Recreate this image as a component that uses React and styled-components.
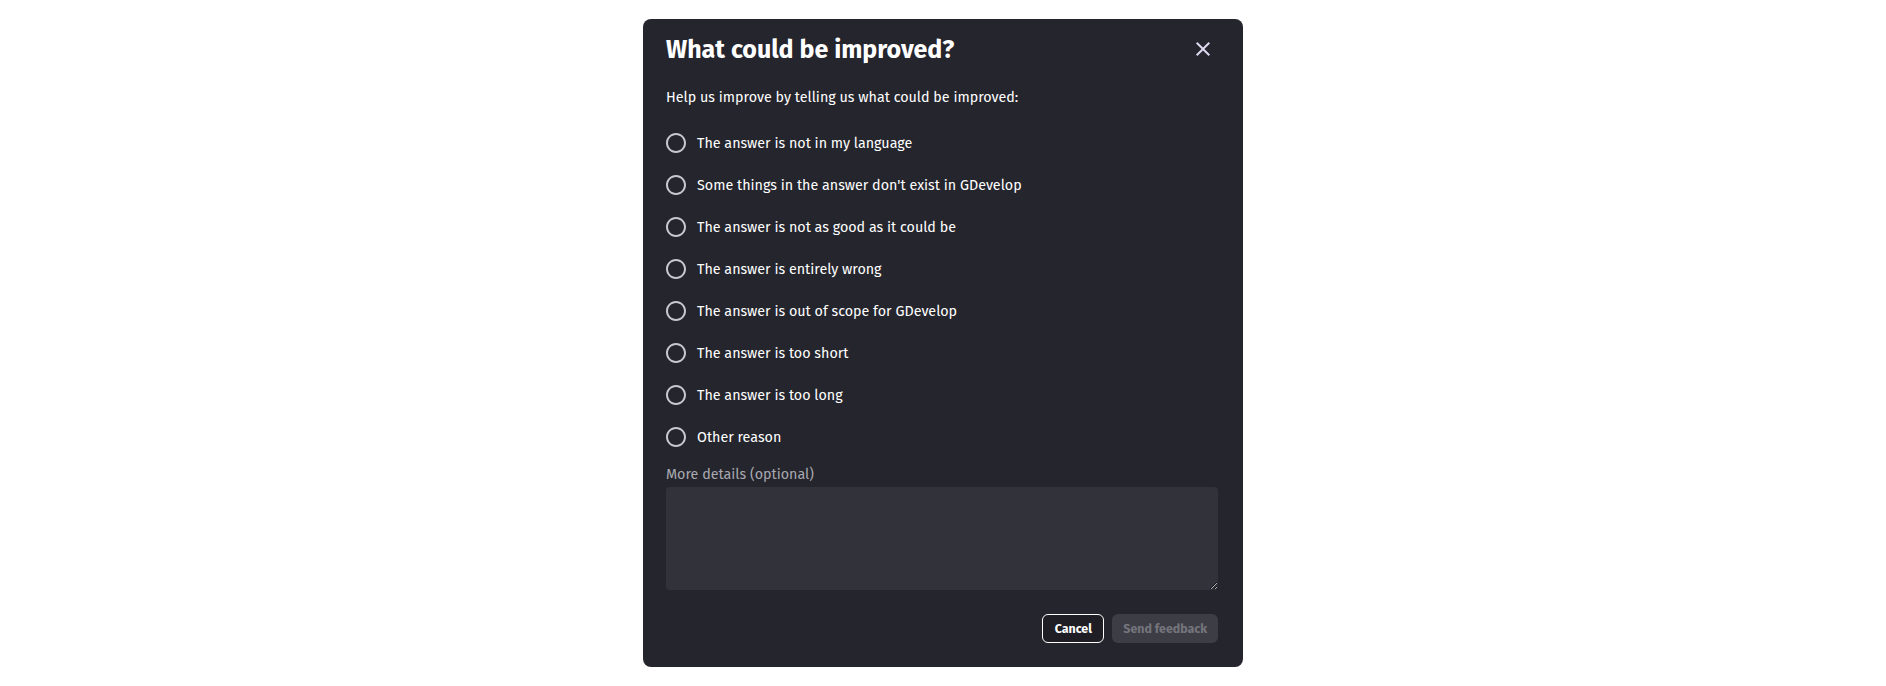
import React from "react";
import styled, { createGlobalStyle } from "styled-components";

const Global = createGlobalStyle`
  html, body { margin: 0; padding: 0; background: #ffffff; }
  body { font-family: "Fira Sans", Lato, "Noto Sans", sans-serif; }
  * { box-sizing: border-box; }
`;

const Page = styled.div`
  height: 686px;
  display: flex;
  align-items: center;
  justify-content: center;
`;

const Dialog = styled.div`
  width: 600px;
  background: #25252d;
  border-radius: 8px;
  padding: 12px 25px 24px 23px;
  display: flex;
  flex-direction: column;
  color: #fafafa;
`;

const Header = styled.div`
  display: flex;
  align-items: center;
  justify-content: space-between;
  height: 38px;
`;

const Title = styled.h1`
  margin: 0;
  font-size: 25px;
  font-weight: 700;
  color: #ffffff;
`;

const CloseButton = styled.button`
  background: none;
  border: 0;
  padding: 0;
  margin-right: 3px;
  margin-top: -2px;
  width: 24px;
  height: 24px;
  display: flex;
  align-items: center;
  justify-content: center;
  color: #ddd8f0;
  cursor: pointer;
`;

const Help = styled.p`
  margin: 19px 0 14px;
  font-size: 14.3px;
  line-height: 20px;
  font-weight: 400;
  color: #ffffff;
`;

const Options = styled.div`
  display: flex;
  flex-direction: column;
`;

const Option = styled.label`
  display: flex;
  align-items: center;
  height: 42px;
  gap: 9px;
  cursor: pointer;
  input { position: absolute; opacity: 0; width: 0; height: 0; }
`;

const RadioIcon = styled.svg`
  width: 24px;
  height: 24px;
  margin-left: -2px;
  fill: #c8c8ce;
  flex-shrink: 0;
`;

const OptionText = styled.span`
  font-size: 14.3px;
  font-weight: 400;
  color: #ffffff;
`;

const FieldLabel = styled.div`
  margin-top: 7px;
  font-size: 14.3px;
  line-height: 20px;
  color: #a9a9b0;
`;

const TextArea = styled.textarea`
  margin-top: 2px;
  width: 100%;
  height: 103px;
  background: #32323b;
  border: 0;
  border-radius: 4px;
  color: #fafafa;
  font-family: inherit;
  font-size: 14px;
  padding: 8px 10px;
  outline: none;
  resize: vertical;
`;

const Actions = styled.div`
  margin-top: 24px;
  display: flex;
  justify-content: flex-end;
  gap: 8px;
`;

const Button = styled.button`
  height: 29px;
  min-width: 62px;
  padding: 0 10px;
  border-radius: 6px;
  font-family: inherit;
  font-size: 12.4px;
  font-weight: 700;
  cursor: ${(p) => (p.$disabled ? "default" : "pointer")};
  border: 1px solid ${(p) => (p.$variant === "outline" ? "#ffffff" : "transparent")};
  background: ${(p) => (p.$variant === "outline" ? "#1e1e24" : "#3d3d45")};
  color: ${(p) => (p.$disabled ? "#75757d" : "#ffffff")};
`;

const reasons = [
  "The answer is not in my language",
  "Some things in the answer don't exist in GDevelop",
  "The answer is not as good as it could be",
  "The answer is entirely wrong",
  "The answer is out of scope for GDevelop",
  "The answer is too short",
  "The answer is too long",
  "Other reason",
];

const Radio = () => (
  <RadioIcon viewBox="0 0 24 24">
    <path d="M12 2C6.48 2 2 6.48 2 12s4.48 10 10 10 10-4.48 10-10S17.52 2 12 2zm0 18c-4.42 0-8-3.58-8-8s3.58-8 8-8 8 3.58 8 8-3.58 8-8 8z" />
  </RadioIcon>
);

export default function App() {
  return (
    <>
      <Global />
      <Page>
        <Dialog>
          <Header>
            <Title>What could be improved?</Title>
            <CloseButton aria-label="Close">
              <svg width="24" height="24" viewBox="0 0 24 24" fill="currentColor">
                <path d="M19 6.41 17.59 5 12 10.59 6.41 5 5 6.41 10.59 12 5 17.59 6.41 19 12 13.41 17.59 19 19 17.59 13.41 12z" />
              </svg>
            </CloseButton>
          </Header>
          <Help>Help us improve by telling us what could be improved:</Help>
          <Options>
            {reasons.map((r) => (
              <Option key={r}>
                <input type="radio" name="reason" value={r} />
                <Radio />
                <OptionText>{r}</OptionText>
              </Option>
            ))}
          </Options>
          <FieldLabel>More details (optional)</FieldLabel>
          <TextArea />
          <Actions>
            <Button $variant="outline">Cancel</Button>
            <Button $disabled>Send feedback</Button>
          </Actions>
        </Dialog>
      </Page>
    </>
  );
}
